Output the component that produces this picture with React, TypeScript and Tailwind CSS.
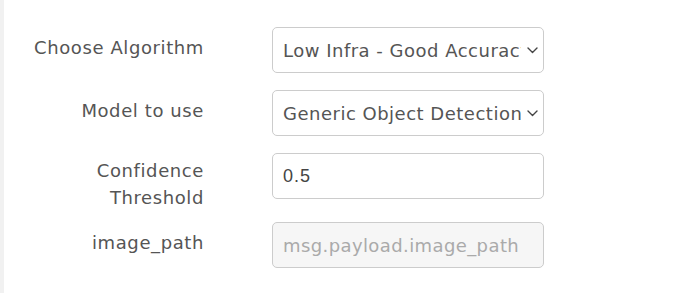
import React from 'react';

const Chevron = () => (
  <svg width="11" height="7" viewBox="0 0 11 7" fill="none" className="shrink-0">
    <path d="M1 1l4.5 4.5L10 1" stroke="#444" strokeWidth="1.4" strokeLinecap="round" strokeLinejoin="round" />
  </svg>
);

const Label = ({ children, pt = 'pt-[7px]' }: { children: React.ReactNode; pt?: string }) => (
  <div className={`w-[200px] shrink-0 text-right text-[18px] leading-[27px] tracking-[0.6px] text-[#555] ${pt}`}>{children}</div>
);

const SelectBox = ({ value }: { value: string }) => (
  <div className="ml-[68px] flex h-[46px] w-[272px] items-center rounded-[5px] border border-[#ccc] bg-white pl-[10px] pr-[4px]">
    <div className="flex-1 overflow-hidden whitespace-nowrap text-[18px] tracking-[0.5px] text-[#555]">{value}</div>
    <div className="pl-[6px] pr-[1px]">
      <Chevron />
    </div>
  </div>
);

export default function App() {
  return (
    <div
      className="h-[293px] w-[688px] border-l-4 border-[#f1f1f1] bg-white pt-[27px]"
      style={{ fontFamily: '"DejaVu Sans", "Noto Sans", sans-serif' }}
    >
      <div className="flex items-start">
        <Label>Choose Algorithm</Label>
        <SelectBox value="Low Infra - Good Accuracy" />
      </div>

      <div className="mt-[17px] flex items-start">
        <Label>Model to use</Label>
        <SelectBox value="Generic Object Detection" />
      </div>

      <div className="mt-[17px] flex items-start">
        <Label pt="pt-[4px]">
          Confidence
          <br />
          Threshold
        </Label>
        <div className="ml-[68px] flex h-[46px] w-[272px] items-center rounded-[5px] border border-[#ccc] bg-white px-[10px]">
          <span className="text-[18px] tracking-[1px] text-[#444]" style={{ fontFamily: '"Liberation Sans", Arial, sans-serif' }}>
            0.5
          </span>
        </div>
      </div>

      <div className="mt-[11px] flex items-start">
        <Label>image_path</Label>
        <div className="ml-[68px] flex h-[46px] w-[272px] items-center overflow-hidden rounded-[5px] border border-[#ccc] bg-[#f6f6f6] px-[10px]">
          <span className="whitespace-nowrap text-[18px] tracking-[0.4px] text-[#aaa]">msg.payload.image_path</span>
        </div>
      </div>
    </div>
  );
}
